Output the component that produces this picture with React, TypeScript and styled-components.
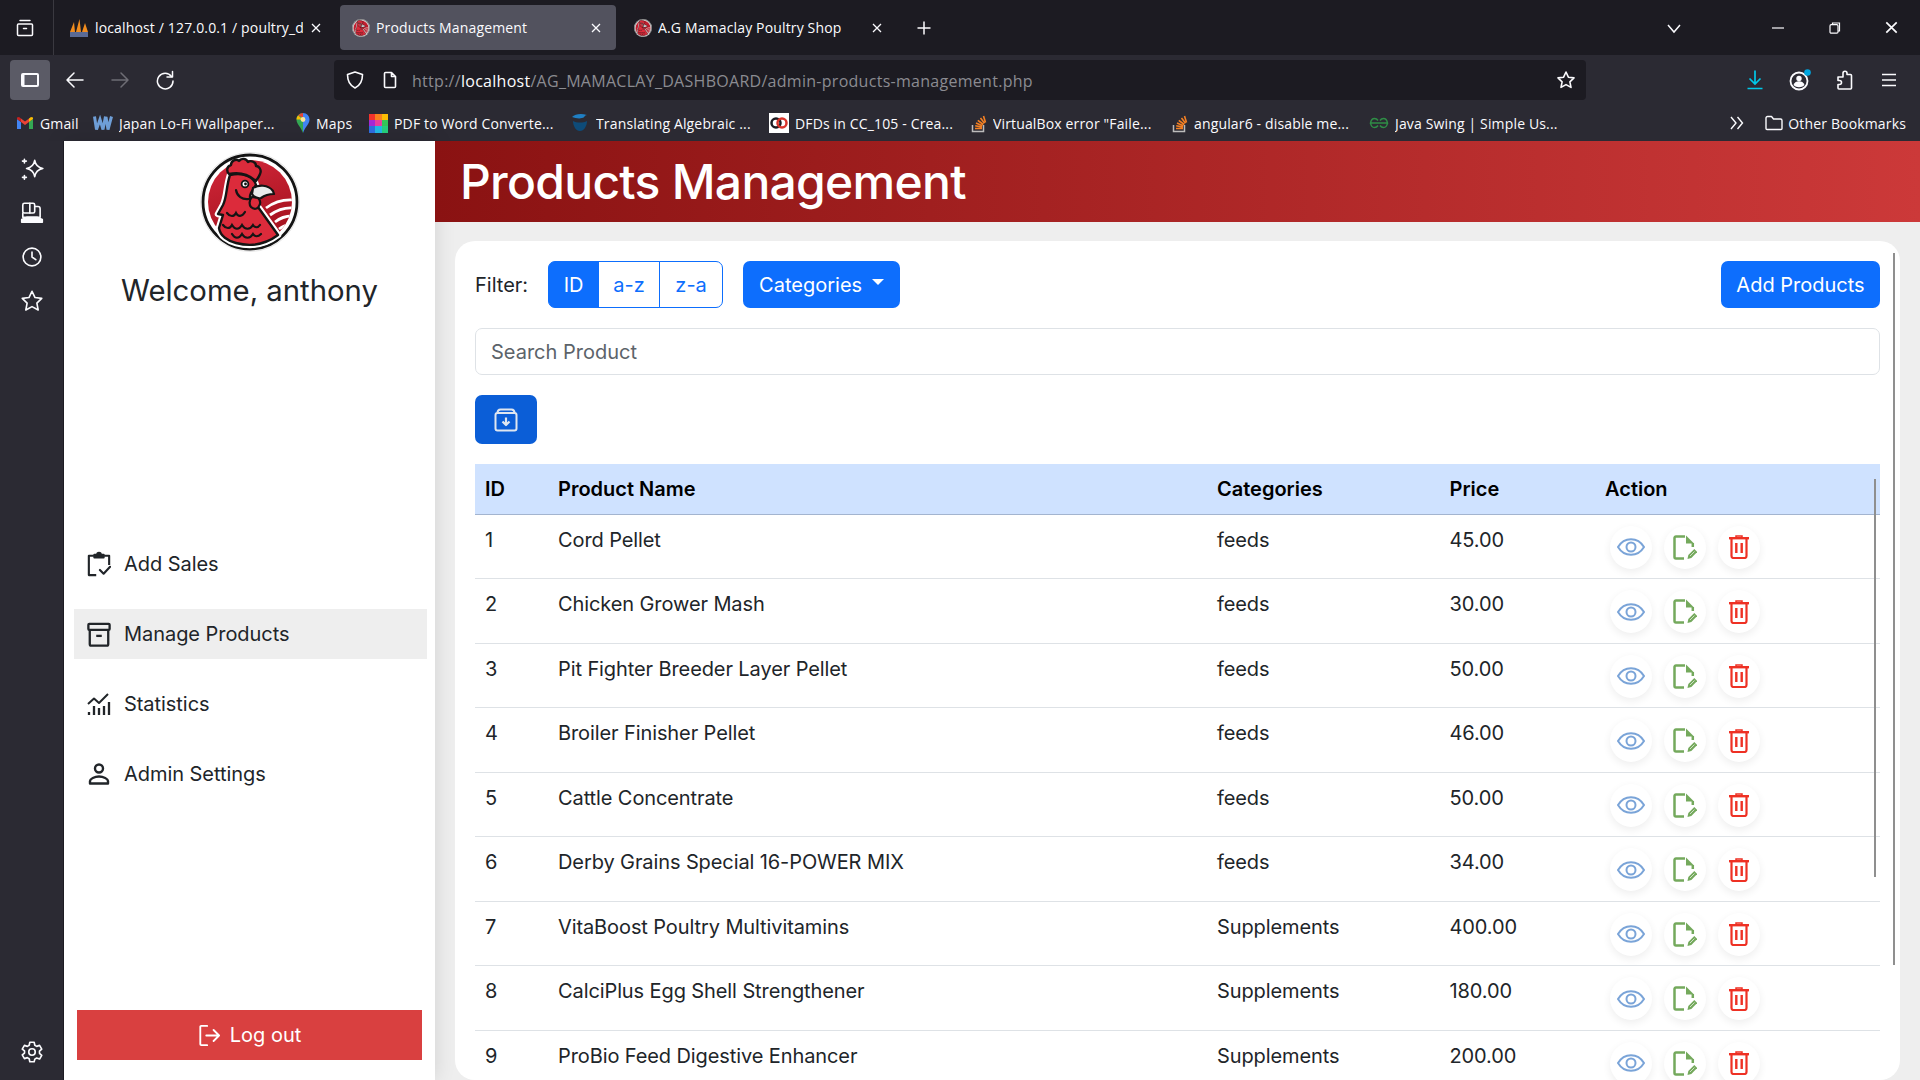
import React from 'react';
import styled, { createGlobalStyle } from 'styled-components';

const GlobalStyle = createGlobalStyle`
  html, body {
    margin: 0;
    padding: 0;
    height: 100%;
    overflow: hidden;
    background: #eeeeee;
    font-family: Inter, "Liberation Sans", sans-serif;
  }
  * {
    box-sizing: border-box;
  }
`

const Screen = styled.div`
  width: 1920px;
  height: 1080px;
  display: flex;
  flex-direction: column;
  overflow: hidden;
`

/* browser chrome */
const ChromeText = styled.span`
  font-family: "Open Sans", "Noto Sans", sans-serif;
  font-size: 14px;
  letter-spacing: 0.15px;
  color: #fbfbfe;
  white-space: nowrap;
  overflow: hidden;
`

const TabBar = styled.div`
  height: 55px;
  background: #1c1b22;
  display: flex;
  align-items: flex-start;
  color: #fbfbfe;
`

const TabViewButton = styled.div`
  width: 54px;
  height: 55px;
  padding-right: 4px;
  border-right: 1px solid #3a3940;
  display: flex;
  align-items: center;
  justify-content: center;
`

const Tabs = styled.div`
  display: flex;
  gap: 4px;
`

const Tab = styled.div<{ $active?: boolean; $width: number; $inset: number }>`
  width: ${p => p.$width}px;
  height: 45px;
  margin-top: 5px;
  padding: 0 13px 0 ${p => p.$inset}px;
  border-radius: 4px;
  background: ${p => (p.$active ? '#52525e' : 'transparent')};
  display: flex;
  align-items: center;
  gap: 6px;
`

const TabTitle = styled(ChromeText)`
  flex: 1;
`

const TabClose = styled.span`
  display: flex;
  width: 14px;
  justify-content: center;
`

const NewTab = styled.div`
  margin: 5px 0 0 19px;
  height: 45px;
  display: flex;
  align-items: center;
`

const TabBarRight = styled.div`
  margin-left: auto;
  height: 55px;
  display: flex;
  align-items: center;
`

const WindowButton = styled.div<{ $width: number }>`
  width: ${p => p.$width}px;
  display: flex;
  justify-content: center;
`

const Toolbar = styled.div`
  height: 55px;
  background: #2b2a33;
  padding: 5px 0 10px 10px;
  display: flex;
  align-items: center;
  color: #fbfbfe;
`

const SidebarToggle = styled.div`
  width: 40px;
  height: 40px;
  border-radius: 4px;
  background: #5b5b66;
  display: flex;
  align-items: center;
  justify-content: center;
`

const NavButton = styled.div<{ $dim?: boolean }>`
  width: 45px;
  display: flex;
  justify-content: center;
  color: ${p => (p.$dim ? '#6e6d75' : '#fbfbfe')};
`

const NavButtons = styled.div`
  display: flex;
  margin-left: 2px;
`

const UrlBar = styled.div`
  width: 1252px;
  height: 40px;
  margin-left: 147px;
  background: #1c1b22;
  border-radius: 4px;
  display: flex;
  align-items: center;
  padding: 0 10px 0 11px;
  gap: 15px;
`

const UrlText = styled.div`
  flex: 1;
  margin: 2px 0 0 -3px;
  font-family: "Open Sans", "Noto Sans", sans-serif;
  font-size: 16px;
  letter-spacing: 0.28px;
  color: #8b8b91;
  white-space: nowrap;
  b {
    font-weight: 400;
    color: #fbfbfe;
  }
`

const ToolIcons = styled.div`
  margin-left: 159px;
  display: flex;
  align-items: center;
  gap: 23px;
`

const BookmarkBar = styled.div`
  height: 31px;
  background: #2b2a33;
  padding: 0 14px 5px 16px;
  display: flex;
  align-items: center;
`

const Bookmark = styled.div<{ $width: number }>`
  width: ${p => p.$width}px;
  display: flex;
  align-items: center;
  gap: 6px;
  flex-shrink: 0;
`

const BookmarkEnd = styled.div`
  margin-left: auto;
  display: flex;
  align-items: center;
  gap: 5px;
`

const MoreBookmarks = styled.div`
  display: flex;
  margin-right: 15px;
`

/* page */
const Page = styled.div`
  flex: 1;
  display: flex;
  min-height: 0;
`

const Rail = styled.div`
  width: 64px;
  background: #2b2a33;
  border-right: 1px solid #1c1b22;
  display: flex;
  flex-direction: column;
  align-items: center;
  padding: 15px 0;
  gap: 18px;
  color: #fbfbfe;
  position: relative;
  z-index: 2;
`

const RailSpacer = styled.div`
  flex: 1;
`

const Sidebar = styled.aside`
  width: 371px;
  background: #fff;
  box-shadow: 0 0 20px rgba(0, 0, 0, 0.12);
  padding: 11px 10px 20px;
  display: flex;
  flex-direction: column;
  align-items: center;
  position: relative;
  z-index: 1;
`

const LogoWrap = styled.div`
  width: 100px;
  height: 100px;
`

const Welcome = styled.h1`
  margin: 20px 0 0;
  font-size: 29.3px;
  line-height: 38px;
  font-weight: 400;
  color: #212529;
`

const SideNav = styled.nav`
  margin: 229px -2px 0 0;
  align-self: stretch;
  display: flex;
  flex-direction: column;
  gap: 20px;
`

const SideItem = styled.a<{ $active?: boolean }>`
  height: 50px;
  padding: 0 13px;
  display: flex;
  align-items: center;
  gap: 13px;
  font-size: 20px;
  letter-spacing: -0.05px;
  color: #212529;
  background: ${p => (p.$active ? '#eeeeee' : 'transparent')};
  svg {
    flex-shrink: 0;
  }
`

const LogoutButton = styled.button`
  margin-top: auto;
  width: 345px;
  height: 50px;
  border: 0;
  background: #d94040;
  color: #fff;
  font: inherit;
  font-size: 20px;
  display: flex;
  align-items: center;
  justify-content: center;
  gap: 10px;
`

const Content = styled.main`
  flex: 1;
  min-width: 0;
  display: flex;
  flex-direction: column;
`

const Banner = styled.header`
  height: 81px;
  background: linear-gradient(90deg, #8a1212, #cc3939);
  padding: 0 25px;
  display: flex;
  align-items: center;
  position: relative;
  z-index: 3;
`

const BannerTitle = styled.h2`
  margin: 0;
  color: #fff;
  font-size: 48px;
  font-weight: 500;
  letter-spacing: -0.72px;
`

const Main = styled.div`
  flex: 1;
  min-height: 0;
  padding: 19px 20px 0;
`

const Card = styled.section`
  height: 100%;
  background: #fff;
  border-radius: 20px;
  padding: 20px;
  overflow: hidden;
  position: relative;
`

const FilterRow = styled.div`
  display: flex;
  align-items: center;
`

const FilterLabel = styled.span`
  font-size: 20px;
  color: #212529;
  margin: 0 20px 0 0;
`

const BtnGroup = styled.div`
  display: flex;
  height: 47px;
`

const GroupBtn = styled.button<{ $active?: boolean; $width: number }>`
  width: ${p => p.$width}px;
  border: 1px solid #0d6efd;
  margin-left: -1px;
  background: ${p => (p.$active ? '#0d6efd' : '#fff')};
  color: ${p => (p.$active ? '#fff' : '#0d6efd')};
  font: inherit;
  font-size: 20px;
  padding: 0;
  &:first-child {
    margin-left: 0;
    border-radius: 7px 0 0 7px;
  }
  &:last-child {
    border-radius: 0 7px 7px 0;
  }
`

const PrimaryBtn = styled.button`
  height: 47px;
  border: 0;
  border-radius: 7px;
  background: #0d6efd;
  color: #fff;
  font: inherit;
  font-size: 20px;
  padding: 0 16px;
  display: flex;
  align-items: center;
`

const CategoriesBtn = styled(PrimaryBtn)`
  margin-left: 20px;
  width: 157px;
  gap: 10px;
`

const Caret = styled.span`
  width: 0;
  height: 0;
  margin-top: -6px;
  border-top: 6px solid #fff;
  border-left: 6px solid transparent;
  border-right: 6px solid transparent;
`

const AddBtn = styled(PrimaryBtn)`
  margin-left: auto;
  width: 159px;
  justify-content: center;
  padding: 0;
`

const SearchInput = styled.input`
  display: block;
  width: 100%;
  height: 47px;
  margin-top: 20px;
  padding: 0 15px;
  border: 1px solid #dee2e6;
  border-radius: 7px;
  font: inherit;
  font-size: 20px;
  &::placeholder {
    color: #5c636a;
    opacity: 1;
  }
`

const ExportBtn = styled.button`
  display: flex;
  align-items: center;
  justify-content: center;
  width: 62px;
  height: 49px;
  margin-top: 20px;
  border: 0;
  border-radius: 7px;
  background: #0b5ed7;
`

const TableWrap = styled.div`
  margin-top: 20px;
  position: relative;
`

const ProductTable = styled.table`
  width: 100%;
  table-layout: fixed;
  border-collapse: collapse;
  font-size: 20px;
  color: #212529;
`

const HeadCell = styled.th<{ $width?: number }>`
  width: ${p => (p.$width ? `${p.$width}px` : 'auto')};
  height: 50px;
  padding: 0 10px;
  background: #cfe2ff;
  border-bottom: 1px solid #a3b4cf;
  color: #000;
  font-weight: 600;
  text-align: left;
`

const Row = styled.tr`
  height: 64.5px;
  border-bottom: 1px solid #dee2e6;
`

const Cell = styled.td`
  padding: 10px;
  line-height: 30px;
  letter-spacing: -0.1px;
  vertical-align: top;
`

const ActionCell = styled(Cell)`
  padding: 11px 10px 9px;
`

const Actions = styled.div`
  display: flex;
  gap: 12px;
  padding-left: 5px;
`

const ActionBtn = styled.span`
  width: 42px;
  height: 43px;
  border-radius: 50%;
  background: #fff;
  box-shadow: 0 3px 8px rgba(0, 0, 0, 0.07);
  display: flex;
  align-items: center;
  justify-content: center;
`

const TableScrollbar = styled.div`
  position: absolute;
  top: 15px;
  right: 4px;
  width: 2px;
  height: 398px;
  background: #8f8f8f;
`

const PageScrollbar = styled.div`
  position: absolute;
  top: 12px;
  right: 5px;
  width: 2px;
  height: 712px;
  background: #8f8f8f;
`

/* drawings */
const stroke = { fill: 'none', stroke: 'currentColor', strokeWidth: 1.5, strokeLinecap: 'round', strokeLinejoin: 'round' } as const

const TabViewIcon = () => (
  <svg width="20" height="20" viewBox="0 0 20 20" {...stroke}>
    <path d="M5 2.500h10M3.500 6h13a1 1 0 0 1 1 1v9.500a1 1 0 0 1-1 1h-13a1 1 0 0 1-1-1V7a1 1 0 0 1 1-1z" />
    <path d="M8.500 10.500h3" />
  </svg>
)

const CloseIcon = ({ size = 10 }: { size?: number }) => (
  <svg width={size} height={size} viewBox="0 0 10 10" fill="none" stroke="#fbfbfe" strokeWidth="1.300">
    <path d="M1 1l8 8M9 1l-8 8" />
  </svg>
)

const PlusIcon = () => (
  <svg width="16" height="16" viewBox="0 0 16 16" fill="none" stroke="#fbfbfe" strokeWidth="1.500">
    <path d="M8 1.500v13M1.500 8h13" />
  </svg>
)

const ChevronIcon = () => (
  <svg width="16" height="16" viewBox="0 0 16 16" fill="none" stroke="#fbfbfe" strokeWidth="1.500">
    <path d="M2 5l6 7 6-7" />
  </svg>
)

const RestoreIcon = () => (
  <svg width="12" height="12" viewBox="0 0 12 12" fill="none" stroke="#fbfbfe" strokeWidth="1.200">
    <path d="M3.500 2.500V1h7v8H9" />
    <rect x="1" y="2.700" width="8" height="8.500" rx="1.200" />
  </svg>
)

const MinIcon = () => (
  <svg width="12" height="12" viewBox="0 0 12 12" stroke="#fbfbfe" strokeWidth="1.200">
    <path d="M0 6h12" />
  </svg>
)

const SidebarIcon = () => (
  <svg width="20" height="16" viewBox="0 0 20 16">
    <rect x="1" y="1" width="18" height="14" rx="2" fill="#fbfbfe" />
    <rect x="4.500" y="3" width="12.500" height="10" fill="#5b5b66" />
  </svg>
)

const BackIcon = ({ flip }: { flip?: boolean }) => (
  <svg width="20" height="20" viewBox="0 0 20 20" {...stroke} style={flip ? { transform: 'scaleX(-1)' } : undefined}>
    <path d="M18 10H2.500M9 3l-7 7 7 7" />
  </svg>
)

const ReloadIcon = () => (
  <svg width="20" height="20" viewBox="0 0 20 20" {...stroke}>
    <path d="M16.500 6.500A7.800 7.800 0 1 0 18 11" />
    <path d="M17.500 1.500v5.500H12" />
  </svg>
)

const ShieldIcon = () => (
  <svg width="20" height="20" viewBox="0 0 20 20" fill="none" stroke="#fbfbfe" strokeWidth="1.600" strokeLinejoin="round">
    <path d="M10 2l7.500 2.600c0 7-2 10.900-7.500 13.400C4.500 15.500 2.500 11.600 2.500 4.600z" />
  </svg>
)

const PageIcon = () => (
  <svg width="20" height="20" viewBox="0 0 20 20" fill="none" stroke="#fbfbfe" strokeWidth="1.600" strokeLinejoin="round">
    <path d="M5.500 2.500h6l4 4v10a1 1 0 0 1-1 1h-9a1 1 0 0 1-1-1v-13a1 1 0 0 1 1-1zM11.500 2.500v4h4" />
  </svg>
)

const StarIcon = ({ size = 20 }: { size?: number }) => (
  <svg width={size} height={size} viewBox="0 0 20 20" fill="none" stroke="#fbfbfe" strokeWidth="1.600" strokeLinejoin="round">
    <path d="M10 2l2.400 5.200 5.600.7-4.100 3.900 1.100 5.600L10 14.600l-5 2.800 1.100-5.600L2 7.900l5.600-.7z" />
  </svg>
)

const DownloadIcon = () => (
  <svg width="20" height="22" viewBox="0 0 20 22" fill="none" stroke="#00c8e8" strokeWidth="1.700">
    <path d="M10 1.500v13M4.500 9.500l5.500 5.500 5.500-5.500M2.500 19.500h15" />
  </svg>
)

const AccountIcon = () => (
  <svg width="24" height="24" viewBox="0 0 24 24">
    <circle cx="11" cy="13" r="8.500" fill="none" stroke="#fbfbfe" strokeWidth="1.800" />
    <circle cx="11" cy="10.500" r="2.700" fill="#fbfbfe" />
    <path d="M5.500 17c1-3 3-3.800 5.500-3.800s4.500.8 5.500 3.800c-3 3-8 3-11 0z" fill="#fbfbfe" />
    <circle cx="19.500" cy="4.500" r="3.300" fill="#00a6e0" />
  </svg>
)

const ExtensionIcon = () => (
  <svg width="20" height="20" viewBox="0 0 20 20" fill="none" stroke="#fbfbfe" strokeWidth="1.600" strokeLinejoin="round">
    <path d="M8 4.500V3.200a2 2 0 0 1 4 0v1.300h3.500a1 1 0 0 1 1 1V18a1 1 0 0 1-1 1H4a1 1 0 0 1-1-1v-3.500h1.500a2 2 0 0 0 0-4H3V7h5z" />
  </svg>
)

const MenuIcon = () => (
  <svg width="22" height="14" viewBox="-3 0 22 14" stroke="#fbfbfe" strokeWidth="1.600">
    <path d="M1 1.500h14M1 7h14M1 12.500h14" />
  </svg>
)

const GmailIcon = () => (
  <svg width="18" height="14" viewBox="0 0 18 14">
    <path d="M1 13V3l4 3v7z" fill="#4285f4" />
    <path d="M13 13V6l4-3v10z" fill="#34a853" />
    <path d="M13 6l4-3V1.500L15 1 13 2.500z" fill="#fbbc04" />
    <path d="M5 6V2.500L9 5.500l4-3V6L9 9z" fill="#ea4335" />
    <path d="M1 3V1.500L3 1l2 1.500V6z" fill="#c5221f" />
  </svg>
)

const WallpaperIcon = () => (
  <svg width="20" height="16" viewBox="0 0 20 16" fill="none" stroke="#6f9fd8" strokeWidth="3">
    <path d="M1.500 1.500l2 13 3.500-10 3 10 2.500-13M13 2l2 12.500L18.500 1.500" />
  </svg>
)

const MapsIcon = () => (
  <svg width="14" height="20" viewBox="0 0 14 20">
    <path d="M7 0C3 0 .5 3 .5 6.500 .5 11 5 14 7 20V0z" fill="#34a853" />
    <path d="M7 0c4 0 6.500 3 6.500 6.500C13.500 11 9 14 7 20V0z" fill="#4285f4" />
    <path d="M2 2.500A6.500 6.500 0 0 1 7 0v4.500z" fill="#ea4335" />
    <path d="M.5 6.500A6.500 6.500 0 0 1 2 2.500L7 6.500z" fill="#fbbc04" />
    <circle cx="7" cy="6.500" r="2.400" fill="#fbe39a" />
  </svg>
)

const PdfIcon = () => (
  <svg width="19" height="20" viewBox="0 0 3 3" shapeRendering="crispEdges">
    <rect width="1" height="1" fill="#f3322c" />
    <rect x="1" width="1" height="1" fill="#f9801d" />
    <rect x="2" width="1" height="1" fill="#fbbc04" />
    <rect y="1" width="1" height="1" fill="#a429d6" />
    <rect x="1" y="1" width="1" height="1" fill="#e83fa0" />
    <rect x="2" y="1" width="1" height="1" fill="#34c759" />
    <rect y="2" width="1" height="1" fill="#2f6de0" />
    <rect x="1" y="2" width="1" height="1" fill="#22b8e6" />
    <rect x="2" y="2" width="1" height="1" fill="#26d07c" />
  </svg>
)

const ChatIcon = () => (
  <svg width="20" height="20" viewBox="0 0 20 20">
    <path d="M2 4c3-3 9-4 15-2-3 0-2 3-5 3-3 1-7 0-10-1z" fill="#1f7fc4" />
    <path d="M3 8c0 5 3 10 7 10s7-5 7-10c-4 2-10 2-14 0z" fill="#0e4b78" />
  </svg>
)

const DfdIcon = () => (
  <svg width="20" height="20" viewBox="0 0 20 20">
    <rect width="20" height="20" fill="#fff" />
    <circle cx="7" cy="10" r="4.500" fill="none" stroke="#1c1b22" strokeWidth="2.500" />
    <circle cx="13" cy="10" r="4.500" fill="none" stroke="#d9342b" strokeWidth="2.500" />
  </svg>
)

const StackIcon = () => (
  <svg width="16" height="20" viewBox="0 0 16 20">
    <path d="M1.500 12v6.500h11V12" fill="none" stroke="#bcbbbb" strokeWidth="1.500" />
    <path d="M4 15.500h7M4.200 12.800l6.800 1.300M5 10l6.300 2.800M6.800 7.300l5.500 4.200M9.500 5l4 5.300M12.500 3l2 6.400" stroke="#f48024" strokeWidth="1.600" fill="none" />
  </svg>
)

const GeeksIcon = () => (
  <svg width="20" height="12" viewBox="0 0 20 12" fill="none" stroke="#2f8d46" strokeWidth="1.500">
    <path d="M10 6H1.500c.5-3 2-4.500 4-4.500 1.500 0 2.500.5 3.500 2M10 6h8.500c-.5-3-2-4.500-4-4.500-1.500 0-2.500.5-3.500 2M1.500 6c.5 3 2 4.500 4 4.500 1.500 0 2.500-.5 3.500-2M18.500 6c-.5 3-2 4.500-4 4.500-1.500 0-2.500-.5-3.500-2" />
  </svg>
)

const ChevronsIcon = () => (
  <svg width="16" height="16" viewBox="0 0 16 16" fill="none" stroke="#fbfbfe" strokeWidth="1.400">
    <path d="M2 2l5 6-5 6M8.500 2l5 6-5 6" />
  </svg>
)

const FolderIcon = () => (
  <svg width="18" height="16" viewBox="0 0 18 16" fill="none" stroke="#fbfbfe" strokeWidth="1.400" strokeLinejoin="round">
    <path d="M1 3a1.500 1.500 0 0 1 1.500-1.500h4L8.500 4h7A1.500 1.500 0 0 1 17 5.500v8a1 1 0 0 1-1 1H2a1 1 0 0 1-1-1z" />
  </svg>
)

const PmaIcon = () => (
  <svg width="20" height="20" viewBox="0 0 20 20">
    <path d="M1 14L5 4l1 10zM7 14l3.500-13L12 14zM13 14l3-9 3 9z" fill="#f08c1e" />
    <rect x="1" y="14" width="18" height="5" fill="#5a6a95" />
  </svg>
)

const RailIcon = ({ children }: { children: React.ReactNode }) => (
  <svg width="26" height="26" viewBox="0 0 24 24" {...stroke}>
    {children}
  </svg>
)

const Logo = ({ size, id }: { size: number; id: string }) => (
  <svg width={size} height={size} viewBox="10 7 100 100">
    <defs>
      <linearGradient id={`${id}disc`} x1="0" y1="0" x2="0.3" y2="1">
        <stop offset="0" stopColor="#d3283a" />
        <stop offset="1" stopColor="#a5121f" />
      </linearGradient>
      <clipPath id={`${id}clip`}>
        <circle cx="60" cy="57" r="42" />
      </clipPath>
    </defs>
    <circle cx="60" cy="57" r="49.500" fill="#fff" stroke="#e4e4e4" strokeWidth="1" />
    <circle cx="60" cy="57" r="47" fill="none" stroke="#141414" strokeWidth="2.800" />
    <circle cx="60" cy="57" r="42" fill={`url(#${id}disc)`} />
    <g clipPath={`url(#${id}clip)`} fill="none" stroke="#fff" strokeWidth="2.800">
      <path d="M76 63c8-6 16-9 28-8M80 70c7-5 14-8 24-7M85 77c5-4 10-6 17-6M89 84c4-3 8-4 12-4" />
    </g>
    <path d="M40 30C36 42 37 52 33 60l-5 9 5 1-4 13c1 8 9 13 17 15 15 4 30 1 42-8L68 62c-6-3-10-8-7-14l5-8c-2-8-12-13-26-10z" fill="#dc2b3b" stroke="#fff" strokeWidth="6.500" strokeLinejoin="round" />
    <path d="M40 30C36 42 37 52 33 60l-5 9 5 1-4 13c1 8 9 13 17 15 15 4 30 1 42-8L68 62c-6-3-10-8-7-14l5-8c-2-8-12-13-26-10z" fill="#dc2b3b" stroke="#141414" strokeWidth="2.400" strokeLinejoin="round" />
    <path d="M39 29c-3-3-2-8 2-9 0-4 5-7 8-4 2-3 7-3 9 1 3-2 8 0 8 4 3 0 6 4 4 8-1 3-3 5-4 7-8-7-18-9-27-7z" fill="#dc2b3b" stroke="#141414" strokeWidth="2.400" strokeLinejoin="round" />
    <path d="M63 43c5-3 15-4 20 3l1 3c-5 0-9 1-13 4-4 1-7-1-9-4z" fill="#e9ecec" stroke="#141414" strokeWidth="2.200" strokeLinejoin="round" />
    <path d="M62 52c-3 3-3 8-1 10 3 3 7 2 8-1 2-3 1-6-1-8z" fill="#dc2b3b" stroke="#141414" strokeWidth="2.200" />
    <circle cx="55" cy="39" r="3.400" fill="#fff" stroke="#141414" strokeWidth="1.800" />
    <circle cx="55.500" cy="39" r="1.400" fill="#141414" />
    <path d="M46 45c1 6 6 10 13 9" fill="none" stroke="#141414" strokeWidth="2.200" strokeLinecap="round" />
    <g fill="none" stroke="#141414" strokeWidth="2.200" strokeLinecap="round">
      <path d="M37 68c3 4 7 4 9 0 2 4 6 4 9-1" />
      <path d="M33 80c3 4 7 4 9 0 3 5 7 5 10 0 3 5 8 5 11 0 2 3 5 3 7 0" />
      <path d="M42 89c3 5 7 5 10 0 3 5 8 5 11 0 2 3 5 3 8 0" />
    </g>
  </svg>
)

const ClipboardCheckIcon = () => (
  <svg width="24" height="26" viewBox="0 0 26 28" fill="none" stroke="#212529" strokeWidth="2.300" strokeLinejoin="round">
    <path d="M7.500 5H2v21h8M18.500 5H24v10" />
    <path d="M8 7V4h3a2 2 0 0 1 4 0h3v3z" fill="#212529" />
    <path d="M14 20.500l4 4 7-7.500" strokeLinecap="round" />
  </svg>
)

const ArchiveIcon = () => (
  <svg width="24" height="25" viewBox="0 0 26 27" fill="none" stroke="#212529" strokeWidth="2.500" strokeLinejoin="round">
    <rect x="1.500" y="2" width="23" height="6.500" rx="1" />
    <path d="M3 8.500v15.500a1.500 1.500 0 0 0 1.500 1.500h17a1.500 1.500 0 0 0 1.500-1.500V8.500" />
    <path d="M10 15h6" />
  </svg>
)

const StatsIcon = () => (
  <svg width="24" height="24" viewBox="0 0 24 24" fill="none" stroke="#212529" strokeWidth="2">
    <path d="M1 12l6-5.500 5 4.500 9-9" strokeLinejoin="round" />
    <path d="M2 23v-3M7 23v-9M12 23v-7M17 23v-9M22 23V10" strokeWidth="2.300" />
  </svg>
)

const PersonIcon = () => (
  <svg width="24" height="24" viewBox="0 0 24 24" fill="none" stroke="#212529" strokeWidth="2.400">
    <circle cx="12" cy="6.500" r="4" />
    <path d="M3 21.500v-2.500c0-2 4.500-4.500 9-4.500s9 2.500 9 4.500v2.500z" strokeLinejoin="round" />
  </svg>
)

const LogoutIcon = () => (
  <svg width="22" height="23" viewBox="0 0 24 24" fill="none" stroke="#fff" strokeWidth="2" strokeLinecap="round" strokeLinejoin="round">
    <path d="M10 1.500H3.500a1 1 0 0 0-1 1v19a1 1 0 0 0 1 1H10" />
    <path d="M9 12h14M17 6l6 6-6 6" />
  </svg>
)

const ExportIcon = () => (
  <svg width="24" height="24" viewBox="0 0 24 24" fill="none" stroke="#dfe6f0" strokeWidth="2" strokeLinejoin="round">
    <rect x="1.500" y="5" width="21" height="17.500" rx="2" />
    <path d="M3.500 5c0-2 1-3.500 3-3.500h11c2 0 3 1.500 3 3.500" />
    <path d="M12 9.500v7.500M8.500 13.500L12 17l3.500-3.500" strokeWidth="2.200" />
  </svg>
)

const EyeIcon = () => (
  <svg width="28" height="18" viewBox="0 0 28 18" fill="none" stroke="#7aa4d8" strokeWidth="2">
    <path d="M1 9c3-5 8-7.800 13-7.800S24 4 27 9c-3 5-8 7.800-13 7.800S4 14 1 9z" strokeLinejoin="round" />
    <circle cx="14" cy="9" r="4.500" />
  </svg>
)

const EditDocIcon = () => (
  <svg width="24" height="25" viewBox="0 0 24 25" fill="none">
    <path d="M12 1.500H3a1.500 1.500 0 0 0-1.500 1.500v19A1.500 1.500 0 0 0 3 23.500h8" stroke="#74a95c" strokeWidth="2.500" />
    <path d="M13 0.500l8 8h-8z" fill="#74a95c" />
    <path d="M19.800 8v4" stroke="#74a95c" strokeWidth="2.500" />
    <path d="M14.500 24l.8-4 6-6 3 3-6 6z" fill="#74a95c" />
    <path d="M17 21l4.500-4.500" stroke="#cfe0c6" strokeWidth="1" />
  </svg>
)

const TrashIcon = () => (
  <svg width="20" height="24" viewBox="0 0 20 24" fill="none" stroke="#ee3124" strokeWidth="2.200">
    <path d="M0 3.200h20" strokeWidth="2.400" />
    <path d="M7 2.500V1h6v1.500" strokeWidth="1.500" />
    <path d="M2.500 3.500v17.500a2 2 0 0 0 2 2h11a2 2 0 0 0 2-2V3.500" />
    <path d="M7.300 8v10M12.700 8v10" strokeWidth="2.400" />
  </svg>
)

interface BookmarkEntry {
  title: string;
  icon: React.ReactNode;
  width: number;
}

const bookmarks: BookmarkEntry[] = [
  { title: 'Gmail', icon: <GmailIcon />, width: 77 },
  { title: 'Japan Lo-Fi Wallpaper...', icon: <WallpaperIcon />, width: 203 },
  { title: 'Maps', icon: <MapsIcon />, width: 73 },
  { title: 'PDF to Word Converte...', icon: <PdfIcon />, width: 201 },
  { title: 'Translating Algebraic ...', icon: <ChatIcon />, width: 199 },
  { title: 'DFDs in CC_105 - Crea...', icon: <DfdIcon />, width: 202 },
  { title: 'VirtualBox error "Faile...', icon: <StackIcon />, width: 201 },
  { title: 'angular6 - disable me...', icon: <StackIcon />, width: 197 },
  { title: 'Java Swing | Simple Us...', icon: <GeeksIcon />, width: 200 },
]

interface Product {
  id: number;
  name: string;
  category: string;
  price: string;
}

const products: Product[] = [
  { id: 1, name: 'Cord Pellet', category: 'feeds', price: '45.00' },
  { id: 2, name: 'Chicken Grower Mash', category: 'feeds', price: '30.00' },
  { id: 3, name: 'Pit Fighter Breeder Layer Pellet', category: 'feeds', price: '50.00' },
  { id: 4, name: 'Broiler Finisher Pellet', category: 'feeds', price: '46.00' },
  { id: 5, name: 'Cattle Concentrate', category: 'feeds', price: '50.00' },
  { id: 6, name: 'Derby Grains Special 16-POWER MIX', category: 'feeds', price: '34.00' },
  { id: 7, name: 'VitaBoost Poultry Multivitamins', category: 'Supplements', price: '400.00' },
  { id: 8, name: 'CalciPlus Egg Shell Strengthener', category: 'Supplements', price: '180.00' },
  { id: 9, name: 'ProBio Feed Digestive Enhancer', category: 'Supplements', price: '200.00' },
]

const App: React.FC = () => {
  return (
    <Screen>
      <GlobalStyle />
      <TabBar>
        <TabViewButton><TabViewIcon /></TabViewButton>
        <Tabs>
          <Tab $width={282} $inset={15}>
            <PmaIcon />
            <TabTitle>localhost / 127.0.0.1 / poultry_d</TabTitle>
            <TabClose><CloseIcon /></TabClose>
          </Tab>
          <Tab $active $width={276} $inset={12}>
            <Logo size={18} id="tabA" />
            <TabTitle>Products Management</TabTitle>
            <TabClose><CloseIcon /></TabClose>
          </Tab>
          <Tab $width={277} $inset={14}>
            <Logo size={18} id="tabB" />
            <TabTitle>A.G Mamaclay Poultry Shop</TabTitle>
            <TabClose><CloseIcon /></TabClose>
          </Tab>
        </Tabs>
        <NewTab><PlusIcon /></NewTab>
        <TabBarRight>
          <WindowButton $width={56}><ChevronIcon /></WindowButton>
          <WindowButton $width={47} />
          <WindowButton $width={57}><MinIcon /></WindowButton>
          <WindowButton $width={57}><RestoreIcon /></WindowButton>
          <WindowButton $width={57}><CloseIcon size={13} /></WindowButton>
        </TabBarRight>
      </TabBar>

      <Toolbar>
        <SidebarToggle><SidebarIcon /></SidebarToggle>
        <NavButtons>
          <NavButton><BackIcon /></NavButton>
          <NavButton $dim><BackIcon flip /></NavButton>
          <NavButton><ReloadIcon /></NavButton>
        </NavButtons>
        <UrlBar>
          <ShieldIcon />
          <PageIcon />
          <UrlText>http://<b>localhost</b>/AG_MAMACLAY_DASHBOARD/admin-products-management.php</UrlText>
          <StarIcon />
        </UrlBar>
        <ToolIcons>
          <DownloadIcon />
          <AccountIcon />
          <ExtensionIcon />
          <MenuIcon />
        </ToolIcons>
      </Toolbar>

      <BookmarkBar>
        {bookmarks.map(b => (
          <Bookmark key={b.title} $width={b.width}>
            {b.icon}
            <ChromeText>{b.title}</ChromeText>
          </Bookmark>
        ))}
        <BookmarkEnd>
          <MoreBookmarks><ChevronsIcon /></MoreBookmarks>
          <FolderIcon />
          <ChromeText>Other Bookmarks</ChromeText>
        </BookmarkEnd>
      </BookmarkBar>

      <Page>
        <Rail>
          <RailIcon>
            <path d="M14.500 4c.8 4.500 3 6.700 7.500 7.500-4.500.8-6.700 3-7.500 7.500-.8-4.500-3-6.700-7.500-7.500 4.500-.8 6.700-3 7.500-7.500z" />
            <path d="M5 3v3.500M3.200 4.700h3.600M5 18v3.500M3.200 19.700h3.600" />
          </RailIcon>
          <RailIcon>
            <rect x="3.500" y="3" width="11" height="9" rx="1.500" />
            <path d="M10 3v9M14.500 6h3c1 0 2 1 2 2v8M3.500 12v4h16" />
            <path d="M2.500 20.500h19V18l-5-2h-9l-5 2z" fill="currentColor" />
          </RailIcon>
          <RailIcon>
            <circle cx="12" cy="12" r="8.200" />
            <path d="M12 7.500V12l3.500 2.500" />
          </RailIcon>
          <RailIcon>
            <path d="M12 3l2.800 5.800 6.200.8-4.500 4.400 1.200 6.300-5.700-3.100-5.700 3.100 1.200-6.300L3 9.600l6.200-.8z" />
          </RailIcon>
          <RailSpacer />
          <RailIcon>
            <circle cx="12" cy="12" r="3" />
            <path d="M10 3h4l.6 2.800 1.700 1 2.700-.9 2 3.400-2.100 1.900v2l2.100 1.900-2 3.400-2.700-.9-1.700 1L14 21h-4l-.6-2.800-1.700-1-2.700.9-2-3.400L5.100 13v-2L3 9.300l2-3.400 2.700.9 1.700-1z" />
          </RailIcon>
        </Rail>

        <Sidebar>
          <LogoWrap><Logo size={100} id="main" /></LogoWrap>
          <Welcome>Welcome, anthony</Welcome>
          <SideNav>
            <SideItem><ClipboardCheckIcon />Add Sales</SideItem>
            <SideItem $active><ArchiveIcon />Manage Products</SideItem>
            <SideItem><StatsIcon />Statistics</SideItem>
            <SideItem><PersonIcon />Admin Settings</SideItem>
          </SideNav>
          <LogoutButton><LogoutIcon />Log out</LogoutButton>
        </Sidebar>

        <Content>
          <Banner><BannerTitle>Products Management</BannerTitle></Banner>
          <Main>
            <Card>
              <FilterRow>
                <FilterLabel>Filter:</FilterLabel>
                <BtnGroup>
                  <GroupBtn $active $width={51}>ID</GroupBtn>
                  <GroupBtn $width={62}>a-z</GroupBtn>
                  <GroupBtn $width={64}>z-a</GroupBtn>
                </BtnGroup>
                <CategoriesBtn>Categories<Caret /></CategoriesBtn>
                <AddBtn>Add Products</AddBtn>
              </FilterRow>
              <SearchInput placeholder="Search Product" />
              <ExportBtn><ExportIcon /></ExportBtn>
              <TableWrap>
                <ProductTable>
                  <thead>
                    <tr>
                      <HeadCell $width={73}>ID</HeadCell>
                      <HeadCell $width={659}>Product Name</HeadCell>
                      <HeadCell $width={232.5}>Categories</HeadCell>
                      <HeadCell $width={155.5}>Price</HeadCell>
                      <HeadCell>Action</HeadCell>
                    </tr>
                  </thead>
                  <tbody>
                    {products.map(item => (
                      <Row key={item.id}>
                        <Cell>{item.id}</Cell>
                        <Cell>{item.name}</Cell>
                        <Cell>{item.category}</Cell>
                        <Cell>{item.price}</Cell>
                        <ActionCell>
                          <Actions>
                            <ActionBtn><EyeIcon /></ActionBtn>
                            <ActionBtn><EditDocIcon /></ActionBtn>
                            <ActionBtn><TrashIcon /></ActionBtn>
                          </Actions>
                        </ActionCell>
                      </Row>
                    ))}
                  </tbody>
                </ProductTable>
                <TableScrollbar />
              </TableWrap>
              <PageScrollbar />
            </Card>
          </Main>
        </Content>
      </Page>
    </Screen>
  )
}

export default App;
